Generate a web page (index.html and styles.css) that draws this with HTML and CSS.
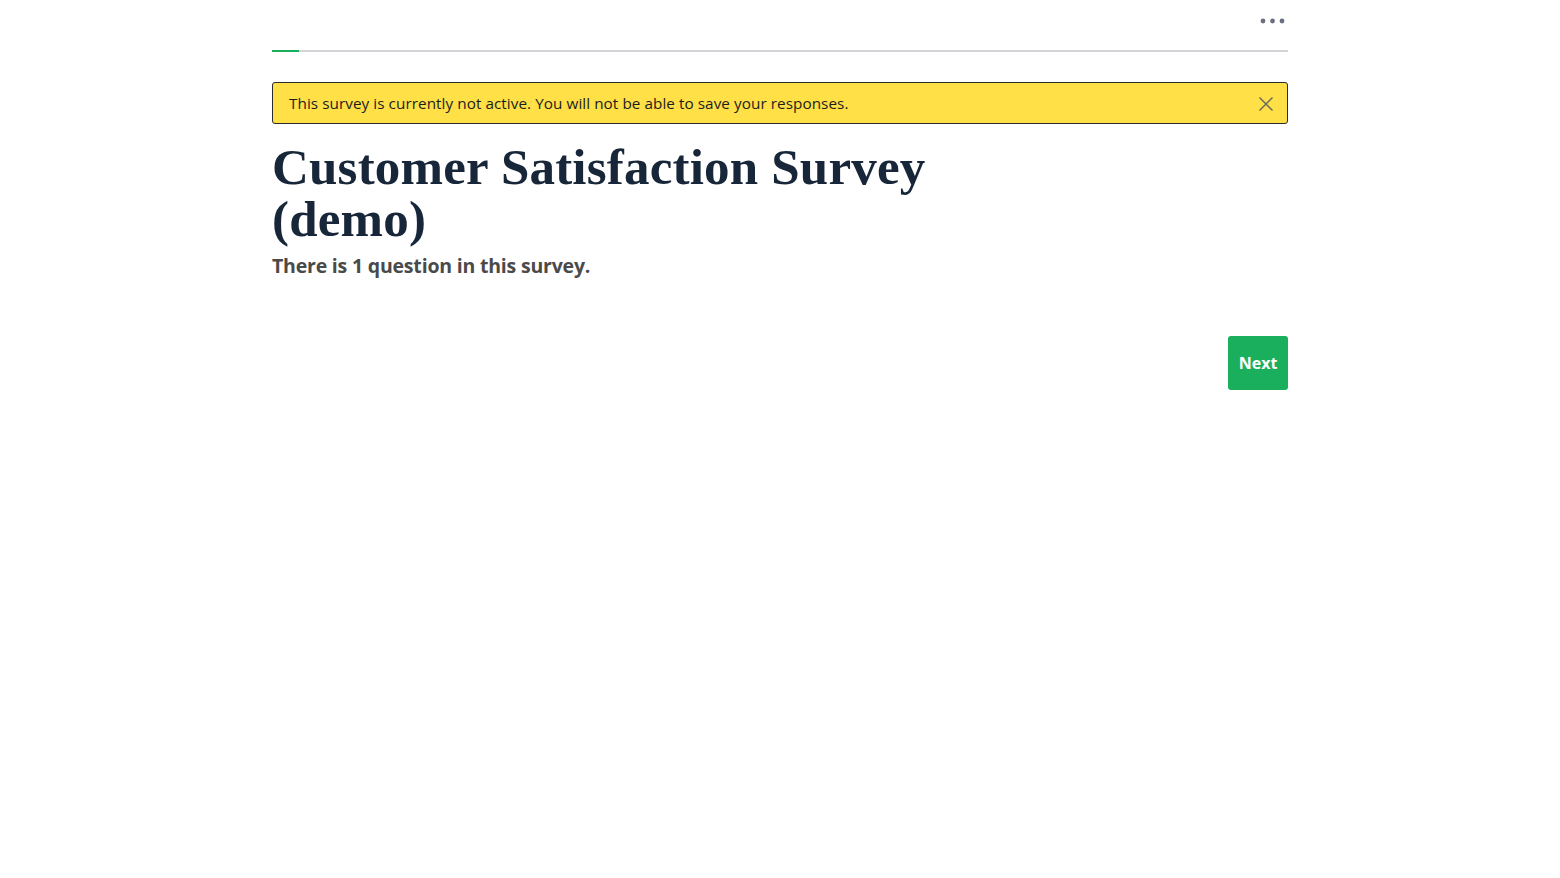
FILE: index.html
```html
<!DOCTYPE html>
<html lang="en">
<head>
<meta charset="utf-8">
<title>Customer Satisfaction Survey (demo)</title>
<link rel="stylesheet" href="styles.css">
</head>
<body>
<div class="page">
  <header class="topbar">
    <button class="more" aria-label="More options">
      <svg width="26" height="6" viewBox="0 0 26 6"><circle cx="3" cy="3" r="2.4"/><circle cx="12.5" cy="3" r="2.4"/><circle cx="22" cy="3" r="2.4"/></svg>
    </button>
  </header>
  <div class="progress"><div class="progress-fill" style="width:2.7%"></div></div>
  <div class="notice">
    <span>This survey is currently not active. You will not be able to save your responses.</span>
    <button class="close" aria-label="Close">
      <svg width="16" height="16" viewBox="0 0 16 16"><path d="M1.5 1.5 L14.5 14.5 M14.5 1.5 L1.5 14.5"/></svg>
    </button>
  </div>
  <h1 class="title">Customer Satisfaction Survey<br>(demo)</h1>
  <p class="subtitle">There is 1 question in this survey.</p>
  <div class="actions">
    <button class="next">Next</button>
  </div>
</div>
</body>
</html>
```
FILE: styles.css
```css
* { box-sizing: border-box; }
html, body { margin: 0; padding: 0; background: #fff; }
body { font-family: "Open Sans", "Liberation Sans", sans-serif; color: #1e1e1e; }
.page { width: 1016px; margin: 0 auto; }
.topbar { height: 50px; display: flex; justify-content: flex-end; align-items: flex-start; }
.more { margin-top: 18px; margin-right: 2px; padding: 0; border: 0; background: none; line-height: 0; }
.more svg { fill: #6b7080; }
.progress { height: 2px; background: #d4d4d8; }
.progress-fill { height: 2px; background: #1aaf5d; }
.notice {
  margin-top: 30px; height: 42px; border: 1px solid #2b2b2b; border-radius: 3px;
  background: #ffe047; display: flex; align-items: center; justify-content: space-between;
  padding: 0 13px 0 16px; font-size: 15.3px; letter-spacing: 0.05px; color: #1d1d1d;
}
.close { padding: 0; border: 0; background: none; line-height: 0; margin-top: 2px; }
.close svg path { stroke: #6b6b60; stroke-width: 1.5; fill: none; }
.title {
  margin: 17px 0 0; font-family: "Liberation Serif", "DejaVu Serif", serif; font-weight: 700;
  font-size: 51px; line-height: 52px; color: #172638; letter-spacing: 0.2px;
}
.subtitle { margin: 7px 0 0; font-size: 19.5px; font-weight: 700; color: #4a4a4a; letter-spacing: -0.2px; }
.actions { display: flex; justify-content: flex-end; margin-top: 57px; }
.next {
  width: 60px; height: 54px; border: 0; border-radius: 3px; background: #1aaf5d; color: #fff;
  font-family: "Open Sans", "Liberation Sans", sans-serif; font-weight: 700; font-size: 16px; padding: 0;
}
```
